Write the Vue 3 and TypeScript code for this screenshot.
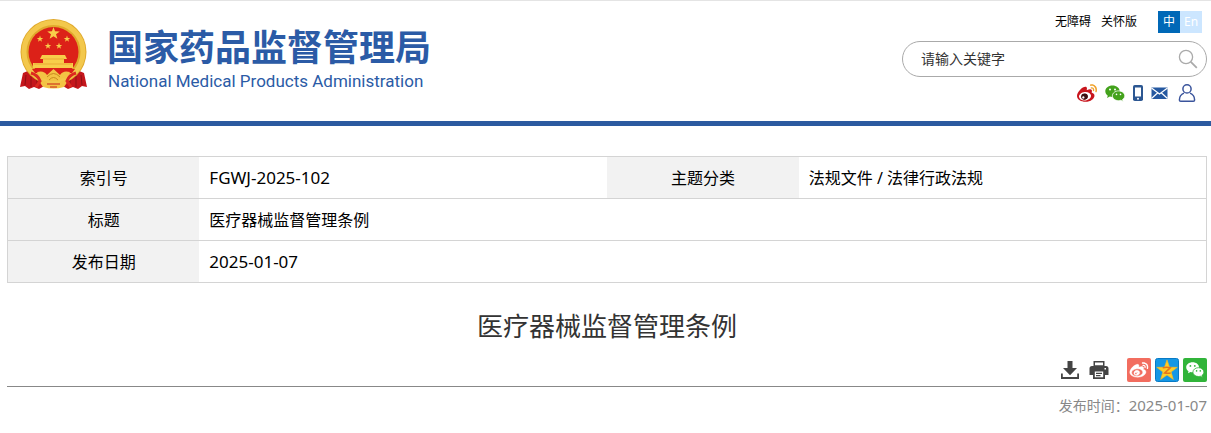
<script setup lang="ts">
import { ref } from 'vue'

const keyword = ref<string>('')
const weiboBody =
  'M10.098 20.323c-3.977.391-7.414-1.406-7.672-4.02-.259-2.609 2.759-5.047 6.74-5.441 3.979-.394 7.413 1.404 7.671 4.018.259 2.6-2.759 5.049-6.737 5.439l-.002.004zM9.05 17.219c-.384.616-1.208.884-1.829.602-.612-.279-.793-.991-.406-1.593.379-.595 1.176-.861 1.793-.601.622.263.82.972.442 1.592zm1.27-1.627c-.141.237-.449.353-.689.253-.236-.09-.313-.361-.177-.586.138-.227.436-.346.672-.24.239.09.315.36.18.601l.014-.028zm.176-2.719c-1.893-.493-4.033.45-4.857 2.118-.836 1.704-.026 3.591 1.886 4.21 1.983.64 4.318-.341 5.132-2.179.8-1.793-.201-3.642-2.161-4.149zm7.563-1.224c-.346-.105-.57-.18-.405-.615.375-.977.42-1.804 0-2.404-.781-1.112-2.915-1.053-5.364-.03 0 0-.766.331-.571-.271.376-1.217.315-2.224-.27-2.809-1.338-1.337-4.869.045-7.888 3.08C1.309 10.87 0 13.273 0 15.348c0 3.981 5.099 6.395 10.086 6.395 6.536 0 10.888-3.801 10.888-6.82 0-1.822-1.547-2.854-2.915-3.284v.01z'
const weiboWaves =
  'M19.967 6.557c-.766-.856-1.908-1.187-2.96-.962-.436.09-.706.511-.616.932.09.42.511.691.932.602.511-.105 1.067.044 1.442.465.376.421.466.977.316 1.473-.136.406.089.856.51.992.405.119.857-.105.992-.512.33-1.021.12-2.178-.646-3.035l.03.045zm2.418-2.195c-1.576-1.757-3.905-2.419-6.054-1.968-.496.104-.812.587-.706 1.081.104.496.586.813 1.082.707 1.532-.331 3.185.15 4.296 1.383 1.112 1.246 1.429 2.943.947 4.416-.165.48.106 1.007.586 1.157.479.165.991-.104 1.157-.586.675-2.088.241-4.478-1.338-6.235l.03.045z'
const star = 'M0-10 2.35-3.24 9.51-3.09 3.8 1.24 5.88 8.09 0 4 -5.88 8.09 -3.8 1.24 -9.51-3.09 -2.35-3.24z'
const smallStars = [
  { x: 20, y: 20 },
  { x: 28, y: 27 },
  { x: 39, y: 27 },
  { x: 47, y: 20 },
]
</script>

<template>
  <div class="page">
    <header class="header">
      <a class="brand" href="#">
        <svg class="emblem" viewBox="0 0 67 71" aria-hidden="true">
          <path d="M10 51 3 54 0 68l5-1 4 3 5-2 5 2 7-4h15l7 4 5-2 5 2 4-3 5 1-3-14-7-3z" fill="#c4161c" />
          <path d="M6 56 5 66M11 56v12M17 60v8M61 56l1 10M56 56v12M50 60v8" stroke="#8f1014" fill="none" />
          <circle cx="33.5" cy="33" r="33" fill="#e0a92c" />
          <circle cx="33.5" cy="33" r="29.500" fill="none" stroke="#f3c84c" stroke-width="5" />
          <circle cx="33.5" cy="33" r="25" fill="#dc2118" />
          <path :d="star" transform="translate(33.500 14.500) scale(.66)" fill="#f8cd4a" />
          <path
            v-for="s in smallStars"
            :key="s.x"
            :d="star"
            :transform="`translate(${s.x} ${s.y}) scale(.34)`"
            fill="#f8cd4a"
          />
          <path d="M22 36h23l2 4H20zM23 40h21v4h9v5H13v-5h10z" fill="#f8cd4a" />
          <path d="M23 40h21M14 45h38" stroke="#eba935" />
          <path d="M12 50h43l-3 4H15z" fill="#dc2118" />
          <path d="M17 53q7-2 10 3l6.500-6 6.500 6q3-5 10-3l-4 7q-5-2-7 2h-11q-3-4-7-2z" fill="#f3c344" />
          <path d="M27 58q6.500-7 13 0M29 61q4.500-5 9 0" stroke="#c98a1f" fill="none" />
          <path d="M19 62q6-2 9 2h11q3-4 9-2l-4 6q-10.500 3-21 0z" fill="#f3c344" />
          <path d="M27 65h13M30 68h7" stroke="#c8231c" />
          <path d="M11 54q7 2 9 8l-4 6M56 54q-7 2-9 8l4 6" stroke="#dd2a20" stroke-width="3" fill="none" />
        </svg>
        <span class="brand-text">
          <strong class="brand-cn">国家药品监督管理局</strong>
          <span class="brand-en">National Medical Products Administration</span>
        </span>
      </a>

      <div class="tools">
        <nav class="top-links">
          <a href="#">无障碍</a>
          <a href="#">关怀版</a>
          <span class="lang">
            <button class="lang-btn active" type="button">中</button>
            <button class="lang-btn" type="button">En</button>
          </span>
        </nav>
        <form class="search" @submit.prevent>
          <input v-model="keyword" type="text" placeholder="请输入关键字" aria-label="请输入关键字" />
          <button type="submit" aria-label="搜索">
            <svg width="20" height="20" viewBox="0 0 20 20" fill="none" stroke="#aaa">
              <circle cx="8" cy="8" r="6.6" stroke-width="1.3" />
              <path d="m12.8 12.8 6 6" stroke-width="1.8" />
            </svg>
          </button>
        </form>
        <div class="social">
          <a href="#" aria-label="微博">
            <svg width="20" height="18" viewBox="0 2 24 20" preserveAspectRatio="none">
              <ellipse cx="9.5" cy="15.5" rx="8" ry="5.2" fill="#fff" />
              <path :d="weiboBody" fill="#c8151d" />
              <ellipse cx="9" cy="16" rx="4" ry="3.4" fill="#3a1013" />
              <circle cx="7.6" cy="16.9" r="1.3" fill="#fff" />
              <path :d="weiboWaves" fill="#f0a22b" />
            </svg>
          </a>
          <a href="#" aria-label="微信">
            <svg width="20" height="18" viewBox="0 0 20 18">
              <path d="M7.5 1.5C3.4 1.5.3 4 .3 7.3c0 1.900 1 3.400 2.500 4.500L2 14l2.800-1.400q1.200.4 2.700.4c4 0 7.200-2.500 7.200-5.700s-3.200-5.800-7.200-5.800z" fill="#43a21c" />
              <path d="M13.600 6.900c-3.500 0-6.200 2.200-6.200 4.900s2.700 4.900 6.200 4.900q1.200 0 2.200-.4l2.400 1.300-.7-2c1.400-.9 2.300-2.200 2.300-3.800 0-2.700-2.700-4.900-6.200-4.900z" fill="#43a21c" stroke="#fff" stroke-width=".8" />
              <g fill="#fff">
                <circle cx="5" cy="5.500" r="1" /><circle cx="10" cy="5.500" r="1" />
                <circle cx="11.500" cy="10.400" r=".8" /><circle cx="15.500" cy="10.400" r=".8" />
              </g>
            </svg>
          </a>
          <a href="#" aria-label="手机版">
            <svg width="10" height="18" viewBox="0 0 10 18">
              <rect y="1" width="10" height="16" rx="1.800" fill="#2c5792" />
              <path d="M2 3.500h6v9H2z" fill="#fff" />
              <circle cx="5" cy="14.700" r="1" fill="#fff" />
            </svg>
          </a>
          <a href="#" aria-label="邮箱">
            <svg width="17" height="18" viewBox="0 0 17 18">
              <path d="M.5 3.500h16v11.500H.5z" fill="#2558a0" />
              <path d="m.5 4 8 6 8-6M.5 14.500l6-5.500M16.500 14.500l-6-5.500" fill="none" stroke="#fff" stroke-width="1.200" />
            </svg>
          </a>
          <a href="#" aria-label="个人中心">
            <svg width="20" height="18" viewBox="0 0 20 18" fill="none" stroke="#3a549c" stroke-width="1.500">
              <circle cx="11" cy="4.900" r="4.100" />
              <path d="M8 9.100c-3 1.200-4.600 3.700-4.600 6.800q0 1.300 1.300 1.300h12.600q1.300 0 1.300-1.300c0-3.100-1.600-5.600-4.600-6.800" />
            </svg>
          </a>
        </div>
      </div>
    </header>

    <main class="content">
      <table class="info">
        <colgroup>
          <col class="col-label" /><col class="col-value" /><col class="col-label" /><col class="col-value" />
        </colgroup>
        <tbody>
          <tr>
            <th scope="row">索引号</th>
            <td><span class="latin">FGWJ-2025-102</span></td>
            <th scope="row">主题分类</th>
            <td>法规文件 / 法律行政法规</td>
          </tr>
          <tr>
            <th scope="row">标题</th>
            <td colspan="3">医疗器械监督管理条例</td>
          </tr>
          <tr>
            <th scope="row">发布日期</th>
            <td colspan="3"><span class="latin">2025-01-07</span></td>
          </tr>
        </tbody>
      </table>

      <h1 class="title">医疗器械监督管理条例</h1>

      <div class="actions">
        <div class="group files">
          <button type="button" aria-label="下载">
            <svg width="20" height="20" viewBox="0 0 20 20" fill="#444">
              <path d="M7.500 1h5v7H17l-7 7.300L3 8h4.500zM1 13.500h1.800V17h14.400v-3.500H19V19H1z" />
            </svg>
          </button>
          <button type="button" aria-label="打印">
            <svg width="20" height="20" viewBox="0 0 20 20" fill="#444">
              <path fill-rule="evenodd" d="M4.500 1h11v5h-11zM6 2.500v2.700h8V2.500z" />
              <path fill-rule="evenodd" d="M3 6h14q2.500 0 2.500 2.500V15h-3.500v4H4v-4H.5V8.500Q.5 6 3 6zm12.500 2v1.500H17V8zM5.800 11.500v5.800h8.400v-5.800z" />
              <path d="M7 12.700h6v1.200H7zM7 15h4.500v1.200H7z" />
            </svg>
          </button>
        </div>
        <div class="group">
          <a href="#" aria-label="分享到微博">
            <svg width="24" height="24" viewBox="0 0 24 24">
              <rect width="24" height="24" rx="2" fill="#f26d5f" />
              <g transform="translate(2.800 2.500) scale(.77)" fill="#fff">
                <path :d="weiboBody" stroke="#fff" stroke-width=".5" /><path :d="weiboWaves" />
              </g>
            </svg>
          </a>
          <a href="#" aria-label="分享到QQ空间">
            <svg width="24" height="24" viewBox="0 0 24 24">
              <rect x=".5" y=".5" width="23" height="23" rx="2" fill="#1597e5" stroke="#087ac5" />
              <path :d="star" transform="translate(12 12.700) scale(1.080)" fill="#ffce27" stroke="#f9b91d" stroke-width=".6" stroke-linejoin="round" />
              <path d="M7.700 9.800q4-1 7.500 0l-5.500 5.200q3 .5 6 0" fill="none" stroke="#e5741c" stroke-width="1.600" />
            </svg>
          </a>
          <a href="#" aria-label="分享到微信">
            <svg width="24" height="24" viewBox="0 0 24 24">
              <rect width="24" height="24" rx="2" fill="#31b43a" />
              <path d="M9.600 4.300C6 4.300 3.200 6.500 3.200 9.300c0 1.600.9 3 2.300 3.900L5 15.300l2.500-1.300q1 .3 2.100.3c3.600 0 6.400-2.200 6.400-5s-2.800-5-6.400-5z" fill="#fff" />
              <path d="M15.400 9.700c-3 0-5.500 2-5.500 4.400s2.500 4.400 5.500 4.400q1 0 1.900-.3l2.200 1.200-.6-1.900c1.200-.8 2-2 2-3.400 0-2.400-2.500-4.400-5.500-4.400z" fill="#fff" stroke="#31b43a" stroke-width=".8" />
              <g fill="#31b43a">
                <circle cx="7.400" cy="7.900" r=".9" /><circle cx="11.800" cy="7.900" r=".9" />
                <circle cx="13.600" cy="12.900" r=".8" /><circle cx="17.300" cy="12.900" r=".8" />
              </g>
            </svg>
          </a>
        </div>
      </div>

      <p class="published">发布时间：<time class="latin" datetime="2025-01-07">2025-01-07</time></p>
    </main>
  </div>
</template>

<style>
body {
  margin: 0;
  background: #fff;
}
</style>

<style scoped>
.page {
  font-family: "Noto Sans", "Noto Sans CJK SC", sans-serif;
  font-size: 16px;
  color: #000;
}
a {
  color: inherit;
  text-decoration: none;
}
button {
  margin: 0;
  padding: 0;
  border: 0;
  background: none;
  font: inherit;
  cursor: pointer;
}
svg {
  display: block;
}
.header {
  display: flex;
  justify-content: space-between;
  border-top: 1px solid #e4e4e4;
  border-bottom: 5px solid #2c5aa0;
  height: 120px;
}
.brand {
  display: flex;
  align-items: flex-start;
  gap: 20px;
  padding: 18px 0 0 20px;
  color: #2b5ba6;
}
.emblem {
  width: 67px;
  height: 71px;
}
.brand-text {
  display: flex;
  flex-direction: column;
  gap: 4px;
  padding-top: 6px;
}
.brand-cn {
  font: 700 36px/40px "Noto Sans CJK SC", sans-serif;
}
.brand-en {
  padding-left: 1px;
  font: 17px/24px Roboto, sans-serif;
}
.tools {
  display: flex;
  flex-direction: column;
  width: 305px;
  padding: 10px 4px 0 0;
}
.top-links {
  display: flex;
  justify-content: flex-end;
  align-items: center;
  gap: 10px;
  padding-right: 5px;
  font-size: 12px;
  line-height: 22px;
}
.lang {
  display: flex;
  margin-left: 11px;
}
.lang-btn {
  width: 22px;
  height: 22px;
  background: #cce6ff;
  color: #fff;
}
.lang-btn.active {
  background: #0068b7;
}
.search {
  box-sizing: border-box;
  display: flex;
  align-items: center;
  height: 36px;
  margin-top: 8px;
  padding: 0 8px 0 18px;
  border: 1px solid #aaa;
  border-radius: 18px;
}
.search input {
  flex: 1;
  min-width: 0;
  padding: 0 0 2px;
  border: 0;
  outline: 0;
  background: none;
  font: inherit;
  font-size: 14px;
  color: #333;
}
.search input::placeholder {
  color: #333;
  opacity: 1;
}
.social {
  display: flex;
  justify-content: flex-end;
  gap: 8px;
  padding: 7px 11px 0 0;
}
.content {
  padding: 30px 4px 0 7px;
}
.info {
  width: 100%;
  table-layout: fixed;
  border-collapse: collapse;
  border: 1px solid #d4d4d4;
}
.col-label {
  width: 16%;
}
.col-value {
  width: 34%;
}
.info tr {
  border-bottom: 1px solid #d4d4d4;
}
.info th,
.info td {
  height: 41px;
  padding: 0;
  line-height: 24px;
}
.info th {
  background: #f2f2f2;
  font-weight: 400;
}
.info td {
  padding-left: 10px;
}
.info .latin {
  font-size: 17px;
}
.title {
  margin: 24px 0 0;
  font-size: 26px;
  font-weight: 400;
  line-height: 38px;
  text-align: center;
  color: #333;
}
.actions {
  display: flex;
  justify-content: flex-end;
  align-items: center;
  gap: 18px;
  margin-top: 13px;
  padding-bottom: 4px;
  border-bottom: 1px solid #888;
}
.group {
  display: flex;
  gap: 4px;
}
.files {
  gap: 9px;
}
.published {
  margin: 6px 0 0;
  font-size: 14px;
  line-height: 24px;
  text-align: right;
  color: #888;
}
.published .latin {
  font-size: 15px;
}
</style>
